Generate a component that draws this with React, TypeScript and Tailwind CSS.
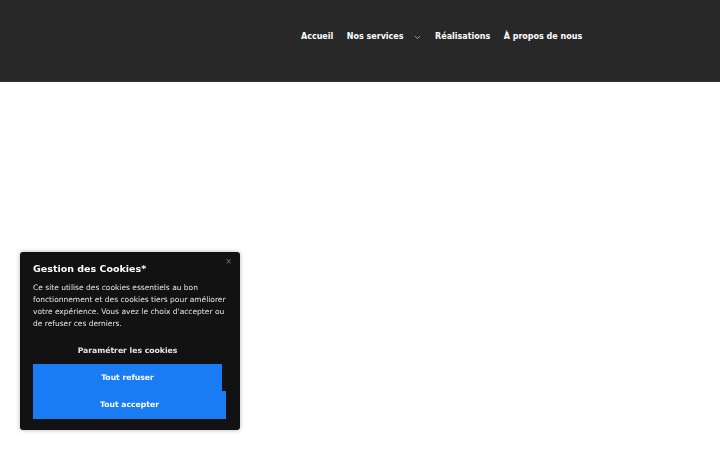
import { ChevronDown } from 'lucide-react'

const navItems = ['Accueil', 'Nos services', 'Réalisations', 'À propos de nous']

export default function App() {
  return (
    <div className="relative min-h-[450px] bg-white font-['DejaVu_Sans',sans-serif]">
      <header className="h-[82px] bg-[#282828] border-b border-[#333333]">
        <nav className="flex items-center h-[74px] pl-[301px] gap-[13.5px] text-[8px] font-bold text-white">
          {navItems.map((item) =>
            item === 'Nos services' ? (
              <span key={item} className="flex items-center gap-[9px]">
                {item}
                <ChevronDown className="w-[9px] h-[9px] text-[#cccccc]" strokeWidth={2} />
              </span>
            ) : (
              <span key={item}>{item}</span>
            )
          )}
        </nav>
      </header>

      <div className="fixed left-[20px] top-[252px] w-[220px] h-[178px] rounded-[3px] bg-[#121212] pl-[13px] pr-[12px] pt-[11px] text-white shadow-[0_0_4px_rgba(0,0,0,0.3)]">
        <button className="absolute right-[8px] top-[6px] text-[8px] leading-none text-[#7a7a7a]">×</button>
        <h2 className="text-[9.5px] leading-[12px] font-bold">Gestion des Cookies*</h2>
        <p className="mt-[7px] text-[7.5px] leading-[12px] text-[#e6e6e6]">
          Ce site utilise des cookies essentiels au bon fonctionnement et des cookies tiers pour améliorer votre expérience. Vous avez le choix d'accepter ou de refuser ces derniers.
        </p>
        <div className="mt-[10px] flex flex-col">
          <button className="h-[22px] w-[189px] text-[7.7px] font-bold text-[#e6e6e6]">Paramétrer les cookies</button>
          <button className="mt-[2px] h-[27px] w-[189px] bg-[#1a7cf5] text-[7.7px] font-bold text-white">Tout refuser</button>
          <button className="h-[28px] w-[193px] bg-[#1a7cf5] text-[7.7px] font-bold text-white">Tout accepter</button>
        </div>
      </div>
    </div>
  )
}
